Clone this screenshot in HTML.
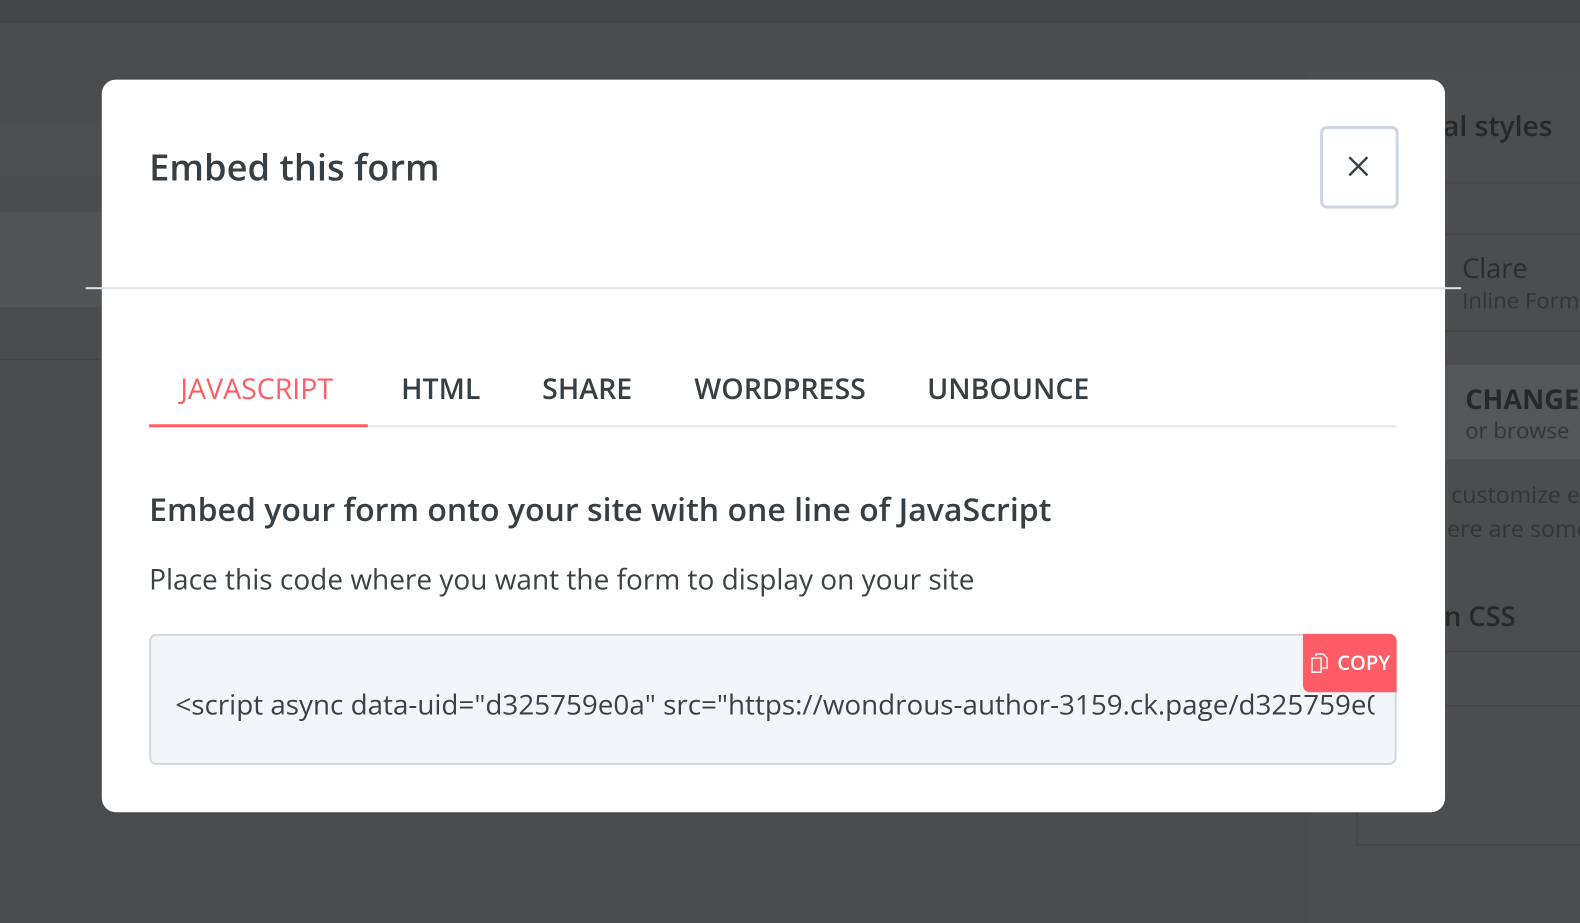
<!DOCTYPE html>
<html><head><meta charset="utf-8"><style>
*{margin:0;padding:0;box-sizing:border-box}
body{width:1580px;height:916px;overflow:hidden;background:#4a4b4c;font-family:"Open Sans","Liberation Sans","DejaVu Sans",sans-serif;position:relative;color:#373f45}
#w{position:absolute;left:0;top:0;width:1568px;height:909px;transform:scale(1.0077);transform-origin:0 0}
.a{position:absolute;white-space:nowrap}
.bg{color:#262829}
</style></head><body><div id="w">
<div class="a" style="left:0;top:0;width:1580px;height:22px;background:#464748;border-bottom:1px solid #404142"></div>
<div class="a" style="left:0;top:120px;width:100px;height:55px;background:#4d4e4f"></div>
<div class="a" style="left:0;top:210px;width:100px;height:95px;background:#525354"></div>
<div class="a" style="left:0;top:356px;width:100px;height:1px;background:#424344"></div>
<div class="a" style="left:1298px;top:70px;width:282px;height:846px;background:#4c4d4e"></div>
<div class="a bg" style="left:1432px;top:106px;font-size:28px;font-weight:600">al styles</div>
<div class="a" style="left:1434px;top:181px;width:146px;height:1px;background:#424344"></div>
<div class="a" style="left:1434px;top:232px;width:146px;height:1px;background:#424344"></div>
<div class="a bg" style="left:1451px;top:247px;font-size:27px;color:#2b2d2f">Clare</div>
<div class="a bg" style="left:1451px;top:283px;font-size:22px;color:#333537">Inline Form</div>
<div class="a" style="left:1434px;top:328px;width:146px;height:1px;background:#424344"></div>
<div class="a" style="left:1434px;top:362px;width:146px;height:94px;background:#555657"></div>
<div class="a bg" style="left:1454px;top:377px;font-size:27px;font-weight:700">CHANGE</div>
<div class="a bg" style="left:1454px;top:412px;font-size:22px;color:#333537">or browse</div>
<div class="a bg" style="left:1440px;top:474px;font-size:23px;color:#333537">customize e</div>
<div class="a bg" style="left:1436px;top:508px;font-size:23px;color:#333537">ere are some</div>
<div class="a bg" style="left:1433px;top:592px;font-size:27px;font-weight:600">n CSS</div>
<div class="a" style="left:1434px;top:646px;width:146px;height:1px;background:#424344"></div>
<div class="a" style="left:1346px;top:700px;width:240px;height:139px;border:1px solid #424344;border-right:none"></div>

<div class="a" style="left:101px;top:79px;width:1333px;height:727px;background:#fff;border-radius:14px"></div>
<div class="a" style="left:85px;top:285px;width:1365px;height:2px;background:#dde2e8"></div>
<div class="a" style="left:148px;top:141px;font-size:36px;font-weight:600;color:#373f45">Embed this form</div>
<div class="a" style="left:1310px;top:125px;width:78px;height:82px;border:3px solid #cdd5e3;border-radius:7px"></div>
<svg class="a" style="left:1337px;top:154px" width="22" height="22" viewBox="0 0 22 22"><path d="M2 2L20 20M20 2L2 20" stroke="#373f45" stroke-width="2.4"/></svg>

<div class="a" style="left:148px;top:422px;width:1238px;height:2px;background:#e3e7ec"></div>
<div class="a" style="left:148px;top:421px;width:217px;height:3px;background:#ff5d66"></div>
<div class="a" style="left:179px;top:367px;font-size:28.3px;color:#ff5d66">JAVASCRIPT</div>
<div class="a" style="left:398px;top:367px;font-size:28.3px;font-weight:600">HTML</div>
<div class="a" style="left:538px;top:367px;font-size:28.3px;font-weight:600">SHARE</div>
<div class="a" style="left:689px;top:367px;font-size:28.3px;font-weight:600">WORDPRESS</div>
<div class="a" style="left:920px;top:367px;font-size:28.3px;font-weight:600">UNBOUNCE</div>

<div class="a" style="left:148px;top:484px;font-size:31.8px;font-weight:600">Embed your form onto your site with one line of JavaScript</div>
<div class="a" style="left:148px;top:556px;font-size:27.8px;color:#3a4248">Place this code where you want the form to display on your site</div>

<div class="a" style="left:148px;top:629px;width:1238px;height:130px;background:#f3f6f9;border:2px solid #d3d8de;border-radius:7px;overflow:hidden">
<div style="position:absolute;left:24px;top:49px;font-size:27.6px;white-space:nowrap;color:#3a4248;width:1190px;overflow:hidden">&lt;script async data-uid="d325759e0a" src="https://wondrous-author-3159.ck.page/d325759e0a/index.js"&gt;&lt;/script&gt;</div>
</div>
<div class="a" style="left:1293px;top:629px;width:93px;height:58px;background:#ff5d66;border-radius:0 7px 0 7px;color:#fff;font-size:20px;font-weight:600">
<svg style="position:absolute;left:8px;top:19px" width="17" height="20" viewBox="0 0 17 20"><path d="M5 3V1H12L16 5V15H11M1 5H10V19H1Z" fill="none" stroke="#fff" stroke-width="1.4"/></svg>
<span style="position:absolute;left:34px;top:15px">COPY</span></div>
</div></body></html>
